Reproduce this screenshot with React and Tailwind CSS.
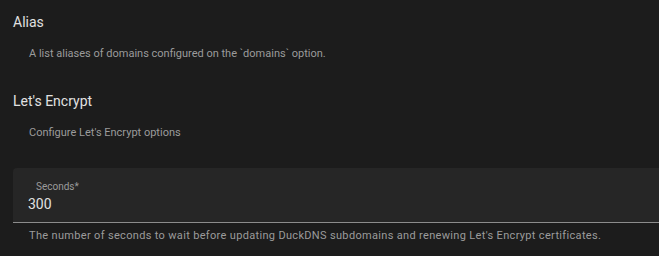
import React from 'react';

const Section = ({ title, description, className = '' }) => (
  <div className={className}>
    <h3 className="pl-[13px] text-[14px] leading-[20px] font-normal text-[#e1e1e1]">{title}</h3>
    <p className="mt-[14px] pl-[29px] text-[11px] leading-[16px] text-[#9b9b9b]">{description}</p>
  </div>
);

const App = () => {
  return (
    <div
      className="w-[659px] h-[256px] overflow-hidden bg-[#1c1c1c]"
      style={{ fontFamily: 'Roboto, "Noto Sans", sans-serif' }}
    >
      <div className="pt-[12px] flex flex-col">
        <Section
          title="Alias"
          description="A list aliases of domains configured on the `domains` option."
        />
        <Section
          className="mt-[29px]"
          title="Let's Encrypt"
          description="Configure Let's Encrypt options"
        />

        {/* Seconds field */}
        <div className="mt-[27px] ml-[13px] h-[55px] rounded-tl-[4px] bg-[#262626] border-b border-[#8c8c8c] pt-[12px] pl-[15px]">
          <div className="pl-[8px] text-[10px] leading-[14px] text-[#9b9b9b]">Seconds*</div>
          <div className="text-[14px] leading-[20px] text-[#e1e1e1]">300</div>
        </div>
        <p className="mt-[5px] pl-[29px] text-[11px] leading-[16px] tracking-[0.03em] text-[#9b9b9b]">
          The number of seconds to wait before updating DuckDNS subdomains and renewing Let's Encrypt certificates.
        </p>
      </div>
    </div>
  );
};

export default App;
